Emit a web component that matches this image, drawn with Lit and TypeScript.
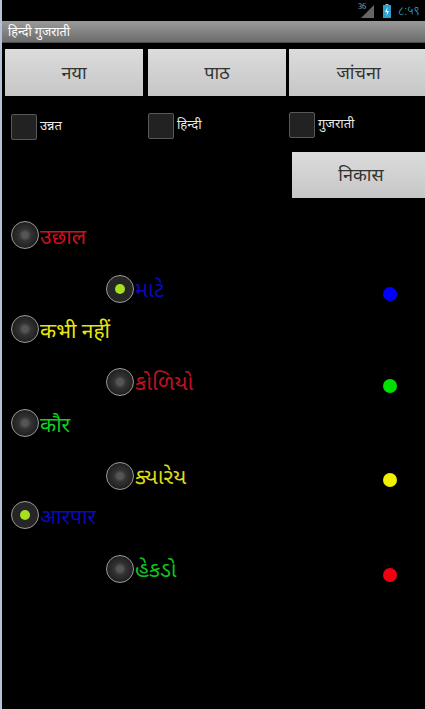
import { LitElement, html, css } from "lit";
import { customElement } from "lit/decorators.js";

type Row = { text: string; color: string; on: boolean; gap: number; guj?: boolean; dot?: string; dotShift?: number };

const ROWS: Row[] = [
  { text: "उछाल", color: "#d0101c", on: false, gap: 0 },
  { text: "માટે", color: "#0a0ab8", on: true, gap: 26, guj: true, dot: "#0000ff", dotShift: 5 },
  { text: "कभी नहीं", color: "#e6e610", on: false, gap: 12 },
  { text: "કોળિયો", color: "#c01020", on: false, gap: 25, guj: true, dot: "#00e000", dotShift: 4 },
  { text: "कौर", color: "#10d020", on: false, gap: 13 },
  { text: "ક્યારેય", color: "#dcdc10", on: false, gap: 25, guj: true, dot: "#f0f000", dotShift: 4 },
  { text: "आरपार", color: "#0a0ab8", on: true, gap: 11 },
  { text: "હેકડો", color: "#10c020", on: false, gap: 26, guj: true, dot: "#f00010", dotShift: 6 },
];

@customElement("app-root")
export class AppRoot extends LitElement {
  static styles = css`
    :host {
      display: block;
      width: 425px;
      height: 709px;
      background: #000;
      overflow: hidden;
      position: relative;
      font-family: "Noto Sans", "Noto Sans Devanagari", "Noto Sans Gujarati", "DejaVu Sans", sans-serif;
      color: #fff;
    }
    .edge {
      position: absolute;
      left: 0;
      top: 0;
      bottom: 0;
      width: 2px;
      background: #b4c4d8;
      z-index: 2;
    }
    .status {
      height: 21px;
      display: flex;
      justify-content: flex-end;
      align-items: center;
      gap: 7px;
    }
    .net {
      position: relative;
      width: 18px;
      height: 15px;
      flex: none;
    }
    .net svg { display: block; }
    .net-label {
      position: absolute;
      left: 0;
      top: 0;
      font-family: "Liberation Serif", serif;
      font-size: 8px;
      line-height: 8px;
      color: #aaa;
    }
    .time {
      font-size: 12px;
      color: #35b5e5;
      width: 27px;
      white-space: nowrap;
      overflow: hidden;
      font-weight: 300;
    }
    .title {
      height: 22px;
      box-sizing: border-box;
      background: linear-gradient(#9a9a9a, #6c6c6c);
      border-bottom: 1px solid #4a4a4a;
      font-size: 12.5px;
      line-height: 21px;
      padding-left: 8px;
    }
    .buttons {
      display: flex;
      padding: 6px 0 0 5px;
    }
    .btn {
      width: 138px;
      height: 47px;
      box-sizing: border-box;
      padding-bottom: 2px;
      flex: none;
      display: flex;
      align-items: center;
      justify-content: center;
      background: linear-gradient(#dcdcdc, #c6c6c6);
      color: #333;
      font-size: 18px;
    }
    .btn.mid { margin: 0 3px 0 5px; }
    .btn.last { width: 136px; padding-left: 3px; }
    .checks {
      display: grid;
      grid-template-columns: 143px 141px 1fr;
      padding: 16px 0 0 5px;
      height: 28px;
    }
    .check {
      display: flex;
      gap: 3px;
      font-size: 13px;
      line-height: 22px;
      white-space: nowrap;
      color: #e8e8e8;
    }
    .check.a { padding-left: 6px; padding-top: 2px; }
    .check.b { padding-top: 1px; }
    .box {
      width: 26px;
      height: 26px;
      box-sizing: border-box;
      background: #222;
      border: 1px solid #585858;
      border-radius: 2px;
      flex: none;
    }
    .exit-row {
      display: flex;
      justify-content: flex-end;
      padding-top: 12px;
    }
    .btn.exit {
      width: 133px;
      height: 46px;
      padding-left: 5px;
    }
    .list {
      padding-top: 23px;
      display: flex;
      flex-direction: column;
    }
    .row {
      height: 28px;
      display: flex;
      align-items: center;
      font-size: 21px;
      padding-left: 11px;
      gap: 1px;
      position: relative;
      white-space: nowrap;
    }
    .row.right { padding-left: 106px; font-size: 22px; }
    .label { padding-top: 1px; }
    .radio {
      width: 28px;
      height: 28px;
      box-sizing: border-box;
      border-radius: 50%;
      border: 1px solid #9a9a9a;
      background: radial-gradient(circle, #555 0 3px, #333 6px, #222 12px);
      display: flex;
      align-items: center;
      justify-content: center;
      flex: none;
    }
    .radio.on { background: #262626; }
    .radio.on::after {
      content: "";
      width: 10px;
      height: 10px;
      border-radius: 50%;
      background: #a4e020;
    }
    .dot {
      position: absolute;
      left: 383px;
      width: 14px;
      height: 14px;
      border-radius: 50%;
    }
  `;

  render() {
    return html`
      <div class="edge"></div>
      <div class="status">
        <div class="net">
          <svg width="18" height="15" viewBox="0 0 18 15">
            <path d="M16 2V15H3Z" fill="#666"></path>
          </svg>
          <span class="net-label">36</span>
        </div>
        <svg width="8" height="14" viewBox="0 0 8 14">
          <rect x="0" y="1" width="8" height="13" fill="#2f9fd0"></rect>
          <rect x="2.5" y="0" width="3" height="1" fill="#bbb"></rect>
          <path d="M4.5 3L2 8H4L3.5 12L6 7H4Z" fill="#dff"></path>
        </svg>
        <div class="time">८:५९</div>
      </div>
      <div class="title">हिन्दी गुजराती</div>
      <div class="buttons">
        <div class="btn">नया</div>
        <div class="btn mid">पाठ</div>
        <div class="btn last">जांचना</div>
      </div>
      <div class="checks">
        <div class="check a"><span class="box"></span>उन्नत</div>
        <div class="check b"><span class="box"></span>हिन्दी</div>
        <div class="check"><span class="box"></span>गुजराती</div>
      </div>
      <div class="exit-row"><div class="btn exit">निकास</div></div>
      <div class="list">
        ${ROWS.map(
          (r, i) => html`
            <div class="row ${i % 2 ? "right" : ""}" style="margin-top:${r.gap}px">
              <span class="radio ${r.on ? "on" : ""}"></span>
              <span class="label" style="color:${r.color}">${r.text}</span>
              ${r.dot
                ? html`<span class="dot" style="background:${r.dot};top:${7 + (r.dotShift ?? 0)}px"></span>`
                : ""}
            </div>
          `
        )}
      </div>
    `;
  }
}
